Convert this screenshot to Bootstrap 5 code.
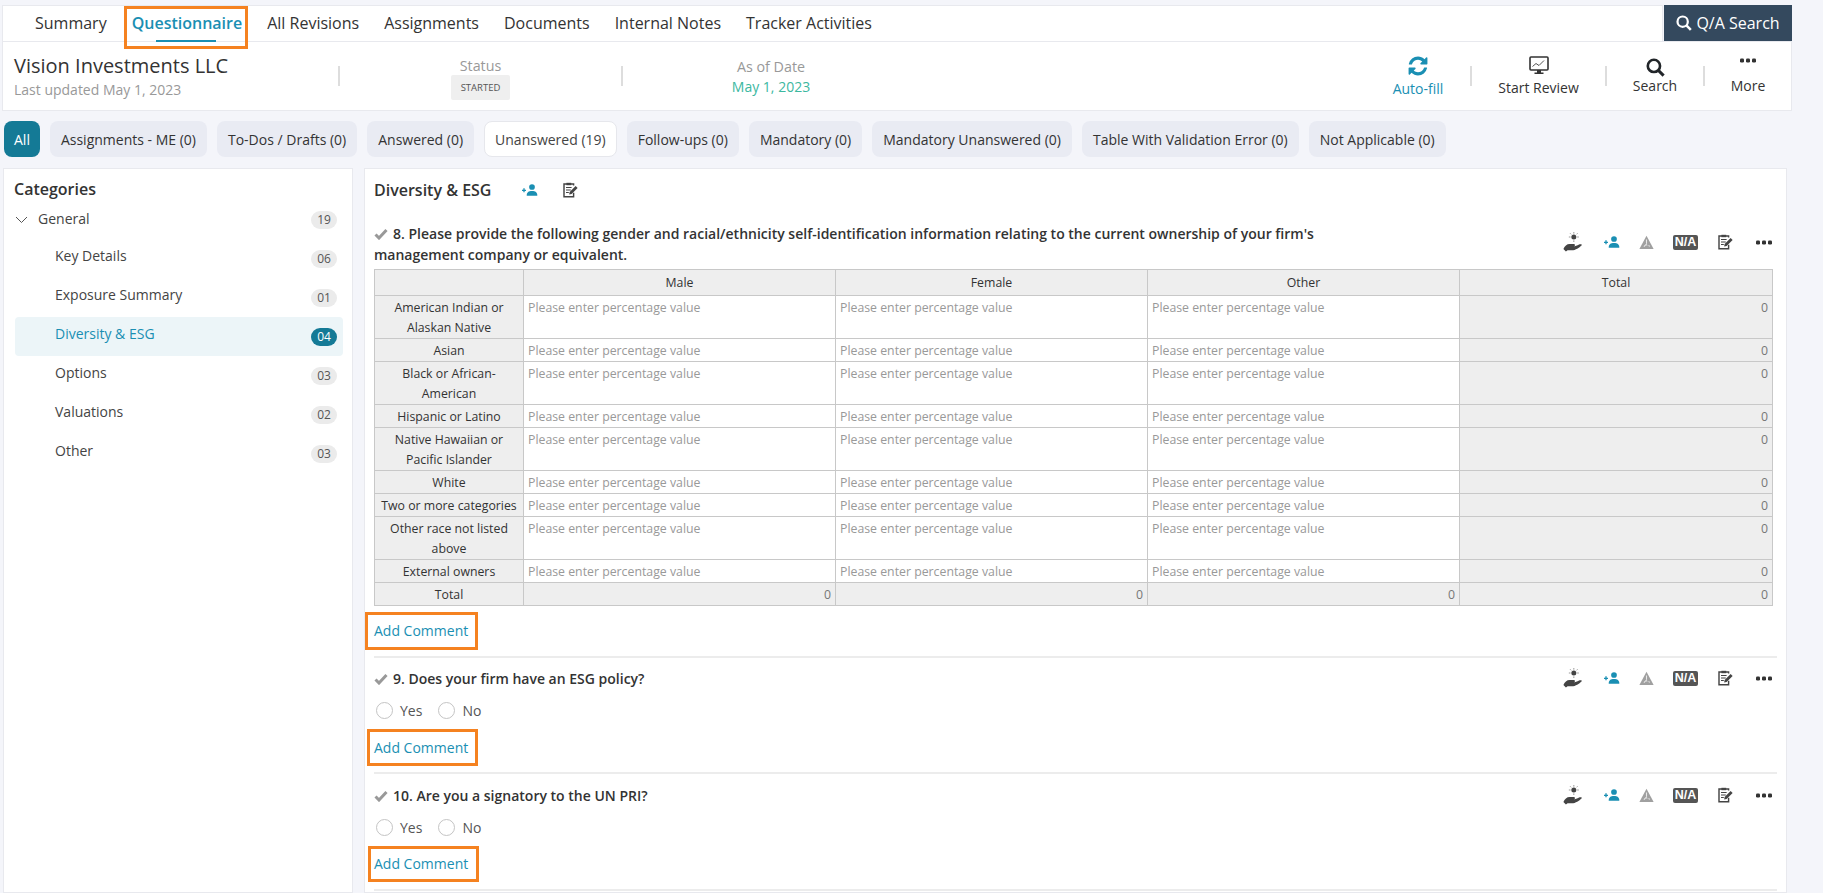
<!DOCTYPE html>
<html lang="en">
<head>
<meta charset="UTF-8">
<title>Questionnaire</title>
<link href="https://cdn.jsdelivr.net/npm/bootstrap@5.3.0/dist/css/bootstrap.min.css" rel="stylesheet">
<style>
html, body { height: 100%; overflow: hidden; }
body { background: #f4f5fa; font-family: "Open Sans", "Liberation Sans", sans-serif; font-size: 14px; color: #333; }
.teal { color: #1a8fb3; }
.tab-row { margin: 5px 31px 0 2px; height: 36px; }
.tab-links { background: #fff; border: 1px solid #e8e9ee; border-bottom: 0; padding-left: 32px; gap: 25px; height: 36px; }
.tab-link { position: relative; font-size: 16px; color: #333; line-height: 34px; text-decoration: none; }
.tab-link.on { color: #1a8fb3; font-weight: 600; }
.tab-link.on::after { content: ""; position: absolute; left: 24px; width: 60px; bottom: -1px; height: 2px; background: #1a8fb3; }
.tab-mark { position: absolute; left: -8px; right: -6px; top: 0; height: 43px; border: 3px solid #f58220; z-index: 2; }
.qa-btn { background: #34495e; color: #fff; border: 0; border-radius: 0; width: 128px; height: 36px; font-size: 16px; padding: 0; margin-left: 1px; }
.head-card { margin: 0 31px 0 2px; height: 70px; background: #fff; border: 1px solid #e8e9ee; }
.name-cell { width: 335px; padding-left: 11px; }
.firm { font-size: 20px; line-height: 25px; }
.updated { font-size: 14px; color: #999; line-height: 20px; margin-top: 2px; }
.h-div { width: 2px; height: 20px; background: #ddd; flex: none; }
.status-cell { width: 281px; text-align: center; padding-top: 4px; }
.date-cell { width: 298px; text-align: center; padding-top: 2px; padding-right: 2px; }
.lbl { color: #999; line-height: 19px; font-size: 14.3px; }
.state { display: inline-block; background: #efefef; color: #555; font-size: 9.5px; padding: 0 10px; line-height: 25px; border-radius: 2px; }
.date-val { color: #3cb89f; line-height: 22px; font-size: 14px; }
.act { text-align: center; font-size: 14px; line-height: 18px; }
.act svg { display: block; margin: 0 auto; }
.pill-row { margin: 10px 0 0 4px; gap: 10px; height: 36px; }
.pill { background: #e9ebf3; border-radius: 8px; line-height: 37px; padding: 0 11px; color: #333; font-size: 14px; }
.pill.cur { background: #fff; border: 1px solid #e6e7ec; line-height: 35px; color: #444; padding: 0 10px; }
.pill.all { background: #147a96; color: #fff; padding: 0 10px; }
.panels { margin: 11px 0 0 3px; gap: 11px; flex: 1; min-height: 0; }
.side-panel { width: 350px; background: #fff; border: 1px solid #e8e9ee; padding: 9px 9px 0 11px; flex: none; }
.side-title { font-size: 16px; font-weight: 600; line-height: 22px; margin-left: -1px; }
.cat-row { height: 39px; padding-left: 40px; padding-right: 6px; color: #444; border-radius: 4px; }
.cat-row > span:first-child { margin-bottom: 7px; }
.cat-row.top { height: 29px; padding-left: 0; color: #444; margin: 5px 0 5px; }
.cat-row.top > svg + span { margin-bottom: 2px; }
.cat-row.on { background: #ecf5f8; color: #1a8fb3; }
.cnt { background: #ebebeb; color: #555; font-size: 12px; width: 26px; height: 18px; line-height: 18px; text-align: center; border-radius: 9px; margin-left: auto; }
.cat-row.on .cnt { background: #147a96; color: #fff; }
.main-panel { width: 1423px; background: #fff; border: 1px solid #e8e9ee; padding: 0 9px; flex: none; overflow: hidden; }
.sec-head { height: 41px; }
.sec-title { font-size: 16px; font-weight: 600; width: 148px; }
.q-wrap { border-bottom: 2px solid #ececec; }
.q-line { font-weight: 600; font-size: 14px; line-height: 21px; color: #333; }
.q-text { width: 960px; }
.chk { display: inline-block; vertical-align: -1px; margin-right: 5px; }
.q-tools { margin-left: auto; height: 24px; flex: none; margin-right: -6px; }
.tool-slot { width: 39px; display: flex; justify-content: center; flex: none; }
.tool-slot.tight { margin-left: -4px; }
.na-tag { background: #555; color: #fff; font-weight: 700; font-size: 12.5px; line-height: 15px; padding: 0 2px; border-radius: 2px; font-family: "Liberation Sans", sans-serif; }
.grid-tbl { width: 1398px; border-collapse: collapse; table-layout: fixed; font-size: 12.3px; line-height: 20px; margin-top: 4px; }
.grid-tbl th, .grid-tbl td { border: 1px solid #c8c8c8; padding: 2px 4px 0; font-weight: 400; vertical-align: top; }
.grid-tbl th { background: #eee; text-align: center; height: 26px; padding: 0 4px; vertical-align: middle; }
.grid-tbl td.r-lbl { background: #eee; text-align: center; padding: 2px 2px 0; }
.grid-tbl td.ph { color: #999; }
.grid-tbl td.tot { background: #eee; text-align: right; color: #777; padding-right: 4px; }
.cmt { display: inline-block; color: #1a8fb3; border: 3px solid #f58220; line-height: 32px; padding-right: 7px; text-decoration: none; }
.cmt.a { margin: 6px 0 6px -9px; padding-left: 6px; }
.cmt.b { margin: 5px 0 6px -7px; padding-left: 4px; line-height: 31px; }
.cmt.c { margin: 5px 0 7px -6px; padding-left: 3px; padding-right: 8px; line-height: 30px; }
.ans { height: 27px; margin-top: 7px; padding-left: 2px; line-height: 27px; color: #555; }
.rad { width: 17px; height: 17px; border: 1px solid #c4c4c4; border-radius: 50%; margin-right: 7px; }
.q-last { padding-top: 9px; }
</style>
</head>
<body class="d-flex flex-column">

<svg width="0" height="0" class="position-absolute">
  <symbol id="i-hand" viewBox="0 0 24 24">
    <circle cx="13" cy="6" r="3" fill="#444"/>
    <path d="M13 0v2M13 10v2M7 6h2M17 6h2M8.500 1.500l1.300 1.300M17.500 1.500l-1.300 1.300" stroke="#999" stroke-width="1.200" fill="none"/>
    <path d="M.5 20.500c1.500-3.500 4-6 7.500-6h5c1.700 0 1.900 2.300.3 2.500h-3c3 .6 6-.3 9-2 1.900-.7 4.200.2 2.900 1.200-2.700 2.600-7 5.800-11.700 5.800H5.500l-2 1.500z" fill="#444"/>
  </symbol>
  <symbol id="i-user" viewBox="0 0 24 18">
    <circle cx="15" cy="4.500" r="4.300" fill="#1a8fb3"/>
    <path d="M7 17.500c0-5 3-7 8-7s8 2 8 7z" fill="#1a8fb3"/>
    <path d="M0 9.500h6M3 6.500v6" stroke="#1a8fb3" stroke-width="2" fill="none"/>
  </symbol>
  <symbol id="i-warn" viewBox="0 0 20 20">
    <path d="M10 1l9.500 17.500H.5z" fill="#a0a0a0"/>
    <path d="M10 6v5.500M6.500 15.500l3-3 1.500 1.500M13 13.500l1 2" stroke="#e8e8e8" stroke-width="1.400" fill="none"/>
  </symbol>
  <symbol id="i-note" viewBox="0 0 20 20">
    <path d="M14.500 4.500V2.500H2.500v16h12v-5" fill="none" stroke="#444" stroke-width="1.800"/>
    <path d="M5.500 1h6v3h-6z" fill="#444"/>
    <path d="M5 7h7M5 10h6M5 13h3.500" stroke="#444" stroke-width="1.300"/>
    <path d="M9 15.500l.5-3 7.500-7.500 2.500 2.500-7.500 7.500z" fill="#444"/>
  </symbol>
  <symbol id="i-dots" viewBox="0 0 16 4">
    <rect x="0" y="0" width="4" height="4" rx="1.200" fill="#333"/>
    <rect x="6" y="0" width="4" height="4" rx="1.200" fill="#333"/>
    <rect x="12" y="0" width="4" height="4" rx="1.200" fill="#333"/>
  </symbol>
  <symbol id="i-check" viewBox="0 0 14 12">
    <path d="M1.500 6.500l3.500 3.500 7.500-8" stroke="#999" stroke-width="3" fill="none"/>
  </symbol>
  <symbol id="i-lens" viewBox="0 0 18 18">
    <circle cx="7.500" cy="7.500" r="5.800" fill="none" stroke="currentColor" stroke-width="2.500"/>
    <path d="M11.700 11.700l5 5" stroke="currentColor" stroke-width="2.800"/>
  </symbol>
</svg>

<div class="tab-row d-flex">
  <div class="tab-links d-flex flex-grow-1">
    <a class="tab-link" href="#">Summary</a>
    <a class="tab-link on" href="#">Questionnaire<span class="tab-mark"></span></a>
    <a class="tab-link" href="#">All Revisions</a>
    <a class="tab-link" href="#">Assignments</a>
    <a class="tab-link" href="#">Documents</a>
    <a class="tab-link" href="#">Internal Notes</a>
    <a class="tab-link" href="#">Tracker Activities</a>
  </div>
  <button class="qa-btn btn d-flex align-items-center justify-content-center gap-1">
    <svg width="16" height="16"><use href="#i-lens"/></svg>Q/A Search
  </button>
</div>

<div class="head-card d-flex align-items-center">
  <div class="name-cell">
    <div class="firm">Vision Investments LLC</div>
    <div class="updated">Last updated May 1, 2023</div>
  </div>
  <div class="h-div"></div>
  <div class="status-cell">
    <div class="lbl">Status</div>
    <div class="state">STARTED</div>
  </div>
  <div class="h-div"></div>
  <div class="date-cell">
    <div class="lbl">As of Date</div>
    <div class="date-val">May 1, 2023</div>
  </div>
  <div class="flex-grow-1"></div>
  <div class="act teal" style="width:104px">
    <svg width="22" height="22" viewBox="0 0 1792 1792"><path fill="#1a8fb3" d="M1639 1056q0 5-1 7-64 268-268 434.500t-478 166.500q-146 0-282.500-55t-243.500-157l-129 129q-19 19-45 19t-45-19-19-45v-448q0-26 19-45t45-19h448q26 0 45 19t19 45-19 45l-137 137q71 66 161 102t187 36q134 0 250-65t186-179q11-17 53-117 8-23 30-23h192q13 0 22.500 9.500t9.500 22.500zm25-800v448q0 26-19 45t-45 19h-448q-26 0-45-19t-19-45 19-45l138-138q-148-137-349-137-134 0-250 65t-186 179q-11 17-53 117-8 23-30 23h-199q-13 0-22.500-9.500t-9.500-22.500v-7q65-268 270-434.500t480-166.500q146 0 284 55.500t245 156.500l130-129q19-19 45-19t45 19 19 45z"/></svg>
    <div style="margin-top:3px">Auto-fill</div>
  </div>
  <div class="h-div"></div>
  <div class="act" style="width:133px">
    <svg width="20" height="20" viewBox="0 0 20 20"><rect x="1" y="1" width="18" height="13" rx="1" fill="none" stroke="#333" stroke-width="1.600"/><path d="M3.500 10.500l3.500-3 3 2 5-5" fill="none" stroke="#555" stroke-width="1"/><path d="M8 14h4v2.500H8zM5.500 16.500h9V18h-9z" fill="#333"/></svg>
    <div style="margin-top:3px">Start Review</div>
  </div>
  <div class="h-div"></div>
  <div class="act" style="width:96px">
    <svg width="19" height="19" class="text-dark"><use href="#i-lens"/></svg>
    <div>Search</div>
  </div>
  <div class="h-div"></div>
  <div class="act" style="width:86px">
    <svg width="16" height="5" style="margin-bottom:14px"><use href="#i-dots"/></svg>
    <div>More</div>
  </div>
</div>

<div class="pill-row d-flex">
  <div class="pill all">All</div>
  <div class="pill">Assignments - ME (0)</div>
  <div class="pill">To-Dos / Drafts (0)</div>
  <div class="pill">Answered (0)</div>
  <div class="pill cur">Unanswered (19)</div>
  <div class="pill">Follow-ups (0)</div>
  <div class="pill">Mandatory (0)</div>
  <div class="pill">Mandatory Unanswered (0)</div>
  <div class="pill">Table With Validation Error (0)</div>
  <div class="pill">Not Applicable (0)</div>
</div>

<div class="panels d-flex">
  <div class="side-panel">
    <div class="side-title">Categories</div>
    <div class="cat-row top d-flex align-items-center">
      <svg width="13" height="8" viewBox="0 0 13 8" style="margin-right:10px"><path d="M1 1l5.500 5.500L12 1" fill="none" stroke="#555" stroke-width="1"/></svg>
      <span>General</span><span class="cnt">19</span>
    </div>
    <div class="cat-row d-flex align-items-center"><span>Key Details</span><span class="cnt">06</span></div>
    <div class="cat-row d-flex align-items-center"><span>Exposure Summary</span><span class="cnt">01</span></div>
    <div class="cat-row on d-flex align-items-center"><span>Diversity &amp; ESG</span><span class="cnt">04</span></div>
    <div class="cat-row d-flex align-items-center"><span>Options</span><span class="cnt">03</span></div>
    <div class="cat-row d-flex align-items-center"><span>Valuations</span><span class="cnt">02</span></div>
    <div class="cat-row d-flex align-items-center"><span>Other</span><span class="cnt">03</span></div>
  </div>

  <div class="main-panel">
    <div class="sec-head d-flex align-items-center">
      <div class="sec-title">Diversity &amp; ESG</div>
      <svg width="16" height="12" style="margin-right:24px"><use href="#i-user"/></svg>
      <svg width="16" height="16"><use href="#i-note"/></svg>
    </div>

    <div class="q-wrap" style="margin-top:13px">
      <div class="d-flex">
        <div class="q-line q-text"><svg class="chk" width="14" height="12"><use href="#i-check"/></svg>8. Please provide the following gender and racial/ethnicity self-identification information relating to the current ownership of your firm's management company or equivalent.</div>
        <div class="q-tools d-flex align-items-center justify-content-end" style="margin-top:7px">
          <span class="tool-slot"><svg width="20" height="20"><use href="#i-hand"/></svg></span>
          <span class="tool-slot"><svg width="16" height="12"><use href="#i-user"/></svg></span>
          <span class="tool-slot tight"><svg width="15" height="15"><use href="#i-warn"/></svg></span>
          <span class="tool-slot"><span class="na-tag">N/A</span></span>
          <span class="tool-slot"><svg width="16" height="16"><use href="#i-note"/></svg></span>
          <span class="tool-slot"><svg width="16" height="5"><use href="#i-dots"/></svg></span>
        </div>
      </div>
      <table class="grid-tbl" id="pctTable">
        <colgroup><col style="width:149px"><col style="width:312px"><col style="width:312px"><col style="width:312px"><col style="width:313px"></colgroup>
        <thead><tr><th></th><th>Male</th><th>Female</th><th>Other</th><th>Total</th></tr></thead>
        <tbody></tbody>
      </table>
      <a class="cmt a" href="#">Add Comment</a>
    </div>

    <div class="q-wrap pt-2">
      <div class="d-flex align-items-center">
        <div class="q-line"><svg class="chk" width="14" height="12"><use href="#i-check"/></svg>9. Does your firm have an ESG policy?</div>
        <div class="q-tools d-flex align-items-center justify-content-end">
          <span class="tool-slot"><svg width="20" height="20"><use href="#i-hand"/></svg></span>
          <span class="tool-slot"><svg width="16" height="12"><use href="#i-user"/></svg></span>
          <span class="tool-slot tight"><svg width="15" height="15"><use href="#i-warn"/></svg></span>
          <span class="tool-slot"><span class="na-tag">N/A</span></span>
          <span class="tool-slot"><svg width="16" height="16"><use href="#i-note"/></svg></span>
          <span class="tool-slot"><svg width="16" height="5"><use href="#i-dots"/></svg></span>
        </div>
      </div>
      <div class="ans d-flex align-items-center"><span class="rad"></span><span class="me-3">Yes</span><span class="rad"></span><span>No</span></div>
      <a class="cmt b" href="#">Add Comment</a>
    </div>

    <div class="q-wrap q-last">
      <div class="d-flex align-items-center">
        <div class="q-line"><svg class="chk" width="14" height="12"><use href="#i-check"/></svg>10. Are you a signatory to the UN PRI?</div>
        <div class="q-tools d-flex align-items-center justify-content-end">
          <span class="tool-slot"><svg width="20" height="20"><use href="#i-hand"/></svg></span>
          <span class="tool-slot"><svg width="16" height="12"><use href="#i-user"/></svg></span>
          <span class="tool-slot tight"><svg width="15" height="15"><use href="#i-warn"/></svg></span>
          <span class="tool-slot"><span class="na-tag">N/A</span></span>
          <span class="tool-slot"><svg width="16" height="16"><use href="#i-note"/></svg></span>
          <span class="tool-slot"><svg width="16" height="5"><use href="#i-dots"/></svg></span>
        </div>
      </div>
      <div class="ans d-flex align-items-center"><span class="rad"></span><span class="me-3">Yes</span><span class="rad"></span><span>No</span></div>
      <a class="cmt c" href="#">Add Comment</a>
    </div>
  </div>
</div>

<script>
  const rowNames = ['American Indian or Alaskan Native', 'Asian', 'Black or African-American', 'Hispanic or Latino',
    'Native Hawaiian or Pacific Islander', 'White', 'Two or more categories', 'Other race not listed above', 'External owners'];
  const body = document.querySelector('#pctTable tbody');
  const ph = '<td class="ph">Please enter percentage value</td>';
  rowNames.forEach(name => {
    const row = document.createElement('tr');
    row.innerHTML = `<td class="r-lbl">${name}</td>${ph}${ph}${ph}<td class="tot">0</td>`;
    body.appendChild(row);
  });
  const last = document.createElement('tr');
  last.innerHTML = '<td class="r-lbl">Total</td><td class="tot">0</td><td class="tot">0</td><td class="tot">0</td><td class="tot">0</td>';
  body.appendChild(last);
</script>
<script src="https://cdn.jsdelivr.net/npm/bootstrap@5.3.0/dist/js/bootstrap.bundle.min.js"></script>
</body>
</html>
